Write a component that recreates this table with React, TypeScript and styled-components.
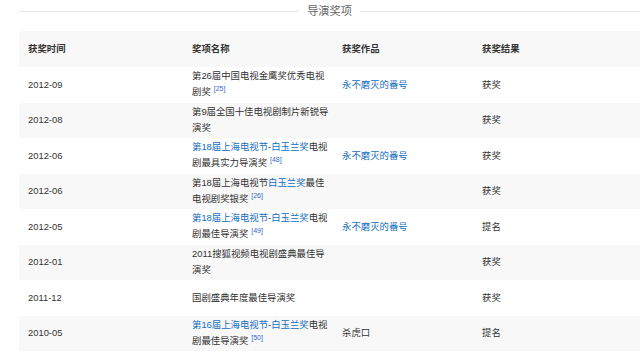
import { Fragment } from 'react';
import styled, { createGlobalStyle } from 'styled-components';

type Seg = { text: string; link?: boolean };

type Award = {
  date: string;
  name: Seg[][];
  cite?: number;
  work?: string;
  workLink?: boolean;
  result: string;
};

const festival18: Seg[] = [
  { text: '第18届上海电视节', link: true },
  { text: '-' },
  { text: '白玉兰奖', link: true },
  { text: '电视' },
];

const awards: Award[] = [
  {
    date: '2012-09',
    name: [[{ text: '第26届中国电视金鹰奖优秀电视' }], [{ text: '剧奖' }]],
    cite: 25,
    work: '永不磨灭的番号',
    workLink: true,
    result: '获奖',
  },
  {
    date: '2012-08',
    name: [[{ text: '第9届全国十佳电视剧制片新锐导' }], [{ text: '演奖' }]],
    result: '获奖',
  },
  {
    date: '2012-06',
    name: [festival18, [{ text: '剧最具实力导演奖' }]],
    cite: 48,
    work: '永不磨灭的番号',
    workLink: true,
    result: '获奖',
  },
  {
    date: '2012-06',
    name: [
      [{ text: '第18届上海电视节' }, { text: '白玉兰奖', link: true }, { text: '最佳' }],
      [{ text: '电视剧奖银奖' }],
    ],
    cite: 26,
    result: '获奖',
  },
  {
    date: '2012-05',
    name: [festival18, [{ text: '剧最佳导演奖' }]],
    cite: 49,
    work: '永不磨灭的番号',
    workLink: true,
    result: '提名',
  },
  {
    date: '2012-01',
    name: [[{ text: '2011搜狐视频电视剧盛典最佳导' }], [{ text: '演奖' }]],
    result: '获奖',
  },
  {
    date: '2011-12',
    name: [[{ text: '国剧盛典年度最佳导演奖' }]],
    result: '获奖',
  },
  {
    date: '2010-05',
    name: [
      [
        { text: '第16届上海电视节', link: true },
        { text: '-' },
        { text: '白玉兰奖', link: true },
        { text: '电视' },
      ],
      [{ text: '剧最佳导演奖' }],
    ],
    cite: 50,
    work: '杀虎口',
    result: '提名',
  },
];

const headers = ['获奖时间', '奖项名称', '获奖作品', '获奖结果'];

export default function App() {
  return (
    <Fragment>
      <GlobalStyle />
      <Section>
        <Title>
          <TitleText>导演奖项</TitleText>
        </Title>
        <Table>
          <Row shaded head>
            {headers.map(h => (
              <Cell key={h}>{h}</Cell>
            ))}
          </Row>
          {awards.map((a, i) => (
            <Row key={i} shaded={i % 2 === 1}>
              <Cell>{a.date}</Cell>
              <Cell>
                <NameText>
                  {a.name.map((line, li) => (
                    <Fragment key={li}>
                      {li > 0 && <br />}
                      {line.map((seg, si) =>
                        seg.link ? <Link key={si}>{seg.text}</Link> : <span key={si}>{seg.text}</span>
                      )}
                    </Fragment>
                  ))}
                  {a.cite && <Cite>[{a.cite}]</Cite>}
                </NameText>
              </Cell>
              <Cell>{a.work && (a.workLink ? <Link>{a.work}</Link> : a.work)}</Cell>
              <Cell>{a.result}</Cell>
            </Row>
          ))}
        </Table>
      </Section>
    </Fragment>
  );
}

const GlobalStyle = createGlobalStyle`
  html, body {
    margin: 0;
    background: #fff;
  }
  body {
    font-family: "Liberation Sans", "Noto Sans CJK SC", sans-serif;
    color: #333;
  }
`;

const Section = styled.div`
  padding-left: 19px;
  width: 621px;
`;

const Title = styled.div`
  height: 23px;
  display: flex;
  align-items: center;
  gap: 8px;

  &::before,
  &::after {
    content: '';
    flex: 1;
    height: 1px;
    background: #e6e6e6;
  }
`;

const TitleText = styled.span`
  font-size: 11.2px;
  color: #666;
  line-height: 1;
`;

const Table = styled.div`
  margin-top: 8px;
  display: flex;
  flex-direction: column;
`;

const Row = styled.div<{ shaded?: boolean; head?: boolean }>`
  display: grid;
  grid-template-columns: 164px 150px 140px 1fr;
  height: ${p => (p.head ? '36px' : '35.5px')};
  background: ${p => (p.shaded ? '#f8f8f8' : '#fff')};
  font-size: 9.4px;
  font-weight: ${p => (p.head ? 700 : 400)};
`;

const Cell = styled.div`
  display: flex;
  align-items: center;
  padding-left: 9px;
  line-height: 16px;
  white-space: nowrap;
`;

const NameText = styled.div`
  line-height: 16px;
`;

const Link = styled.span`
  color: #136ec2;
`;

const Cite = styled.sup`
  color: #3366cc;
  font-size: 7px;
  margin-left: 3px;
  vertical-align: 0;
  position: relative;
  top: -4px;
`;
